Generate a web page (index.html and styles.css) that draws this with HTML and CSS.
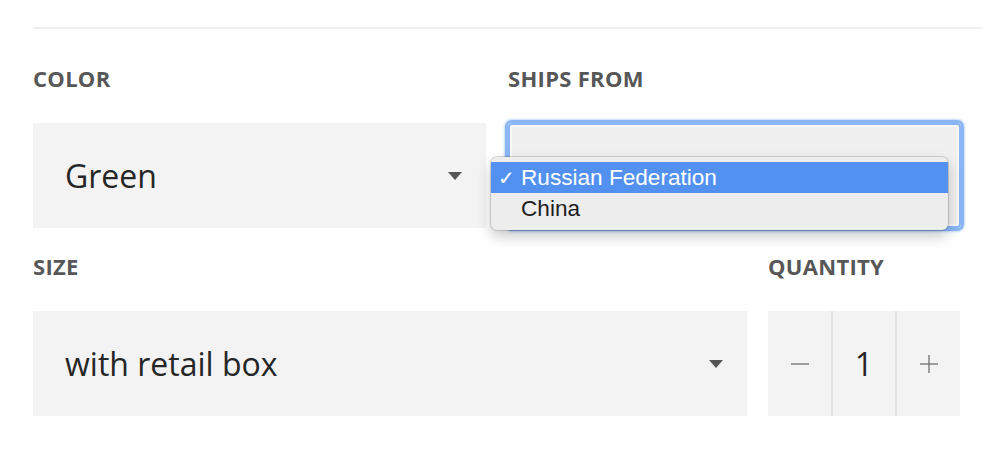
FILE: index.html
```html
<!DOCTYPE html>
<html lang="en">
<head>
  <meta charset="UTF-8">
  <title>Product Options</title>
  <link rel="stylesheet" href="styles.css">
</head>
<body>
  <div class="options">
    <hr class="divider">

    <div class="row row-top">
      <div class="field">
        <div class="field-label">Color</div>
        <div class="select-box">
          <span class="select-value">Green</span>
          <span class="caret"></span>
        </div>
      </div>

      <div class="field">
        <div class="field-label">Ships From</div>
        <div class="select-box focused">
          <ul class="menu">
            <li class="menu-item selected"><span class="check">&#10003;</span>Russian Federation</li>
            <li class="menu-item"><span class="check"></span>China</li>
          </ul>
        </div>
      </div>
    </div>

    <div class="row row-bottom">
      <div class="field">
        <div class="field-label">Size</div>
        <div class="select-box">
          <span class="select-value">with retail box</span>
          <span class="caret"></span>
        </div>
      </div>

      <div class="field">
        <div class="field-label">Quantity</div>
        <div class="qty">
          <div class="qty-btn">
            <svg width="18" height="18" viewBox="0 0 18 18"><line x1="0" y1="9" x2="18" y2="9" stroke="#777" stroke-width="1.4"/></svg>
          </div>
          <div class="qty-value">1</div>
          <div class="qty-btn">
            <svg width="18" height="18" viewBox="0 0 18 18"><line x1="0" y1="9" x2="18" y2="9" stroke="#777" stroke-width="1.4"/><line x1="9" y1="0" x2="9" y2="18" stroke="#777" stroke-width="1.4"/></svg>
          </div>
        </div>
      </div>
    </div>
  </div>
</body>
</html>
```

FILE: styles.css
```css
body {
  margin: 0;
  background: #fff;
  font-family: 'Open Sans', sans-serif;
  color: #2a2a2a;
}
.options {
  padding: 27px 0 0 33px;
}
.divider {
  width: 949px;
  margin: 0;
  border: 0;
  border-top: 2px solid #efefef;
}
.row {
  display: grid;
  width: 928px;
  column-gap: 22px;
}
.row-top {
  grid-template-columns: 453px 453px;
  margin-top: 37px;
}
.row-bottom {
  grid-template-columns: 714px 192px;
  column-gap: 21px;
  margin-top: 26px;
}
.field-label {
  font-size: 22px;
  line-height: 24px;
  font-weight: 700;
  color: #575757;
  text-transform: uppercase;
  letter-spacing: 0.3px;
  margin-bottom: 33px;
}
.select-box {
  position: relative;
  height: 105px;
  background: #f3f3f3;
  display: flex;
  align-items: center;
  justify-content: space-between;
  padding: 0 24px 0 32px;
}
.select-value {
  font-size: 32px;
  color: #262626;
}
.caret {
  width: 0;
  height: 0;
  border-left: 7px solid transparent;
  border-right: 7px solid transparent;
  border-top: 8px solid #555;
}
.select-box.focused {
  background: #f0f0f0;
  border-radius: 4px;
  box-shadow: 0 0 0 3px #8ab6f5, 0 0 2px 4px rgba(138, 182, 245, 0.5), inset 0 0 0 2px #8ab6f5, inset 0 0 0 4px #f8f8f8;
}
.menu {
  position: absolute;
  left: -17px;
  top: 34px;
  width: 457px;
  margin: 0;
  padding: 5px 0 5px;
  list-style: none;
  background: #ededed;
  border-radius: 6px;
  box-shadow: 0 0 0 1px rgba(0, 0, 0, 0.14), 0 6px 14px rgba(0, 0, 0, 0.22);
  font-family: 'Liberation Sans', Arial, sans-serif;
  font-size: 22.6px;
}
.menu-item {
  display: flex;
  align-items: center;
  height: 32px;
  color: #1e1e1e;
}
.menu-item.selected {
  background: #5391f0;
  color: #fff;
  height: 31px;
}
.check {
  width: 30px;
  padding-left: 7px;
  box-sizing: border-box;
  font-size: 20px;
}
.qty {
  display: grid;
  grid-template-columns: 63px 66px 63px;
  height: 105px;
  background: #f3f3f3;
}
.qty-btn, .qty-value {
  display: flex;
  align-items: center;
  justify-content: center;
}
.qty-value {
  font-size: 32px;
  color: #262626;
  border-left: 2px solid #e4e4e4;
  border-right: 2px solid #e4e4e4;
}
```
